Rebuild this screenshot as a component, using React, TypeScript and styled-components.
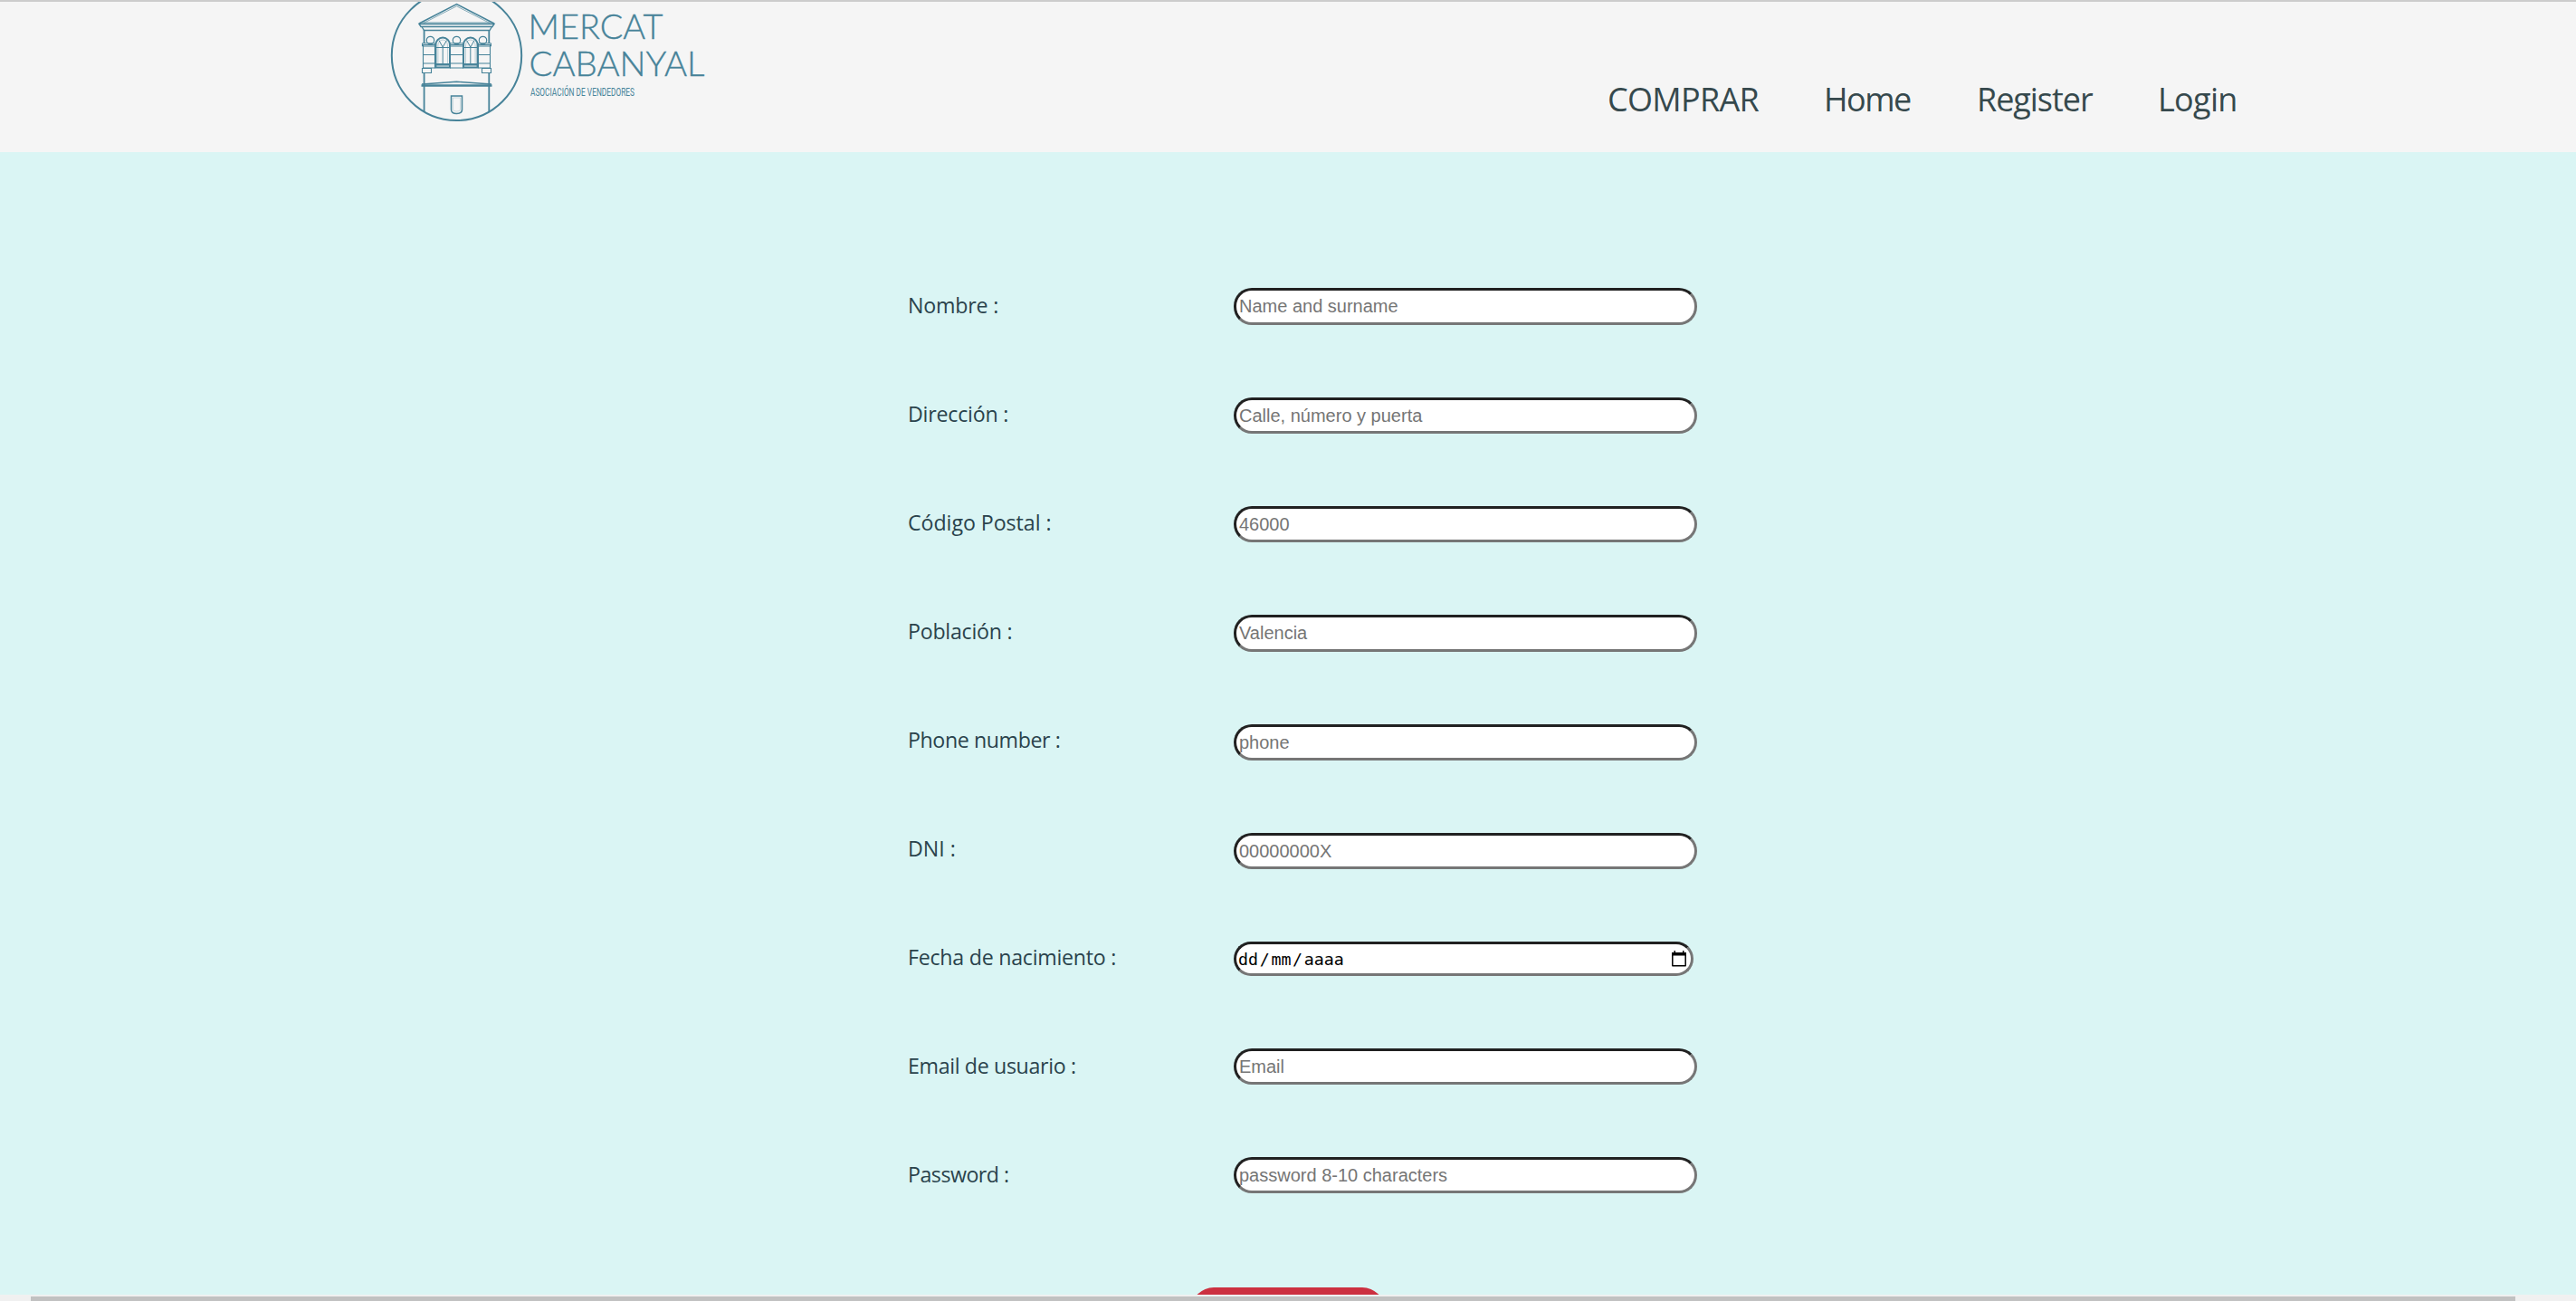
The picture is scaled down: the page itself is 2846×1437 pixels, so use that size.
import React from "react";
import styled, { createGlobalStyle } from "styled-components";

const Global = createGlobalStyle`
  *{box-sizing:border-box}
  html,body{margin:0;padding:0;overflow:hidden}
  body{font-family:"Open Sans","Noto Sans",sans-serif;}
`;
const Page = styled.div`
  width:2846px;height:1437px;display:flex;flex-direction:column;background:#daf5f4;overflow:hidden;
`;
const Header = styled.header`
  flex:none;height:168px;background:#f5f5f5;border-top:2px solid #cccccc;
  display:flex;justify-content:space-between;padding:0 373px 0 420px;
`;
const Logo = styled.svg`display:block;width:380px;height:166px;`;
const Nav = styled.nav`display:flex;padding-top:83px;`;
const NavLink = styled.a<{ $w: number; $ls: number }>`
  width:${p => p.$w}px;font-size:36px;line-height:50px;color:#36494d;letter-spacing:${p => p.$ls}px;white-space:nowrap;
`;
const Form = styled.form`
  flex:1;min-height:0;overflow:hidden;display:flex;flex-direction:column;padding:150px 0 0 1003px;
`;
const Row = styled.div`
  display:flex;align-items:flex-start;height:120px;flex:none;
`;
const Label = styled.label<{ $ls: number }>`
  width:360px;line-height:38px;font-size:23.2px;color:#2a434c;letter-spacing:${p => p.$ls}px;white-space:nowrap;
`;
const Field = styled.input<{ $h: number; $drop: number }>`
  width:512px;height:${p => p.$h}px;margin:${p => p.$drop}px 0 0;border:3px inset #767676;border-radius:20px;padding:0 3px;
  background:#fff;font:20px "Liberation Sans",Arial,sans-serif;outline:none;
  &::placeholder{color:#757575;opacity:1}
`;
const DateField = styled.div<{ $drop: number }>`
  width:508px;height:38px;margin-top:${p => p.$drop}px;border:3px inset #767676;border-radius:20px;padding:0 5px 0 2px;background:#fff;
  display:flex;align-items:center;justify-content:space-between;color:#000;
`;
const DateText = styled.div`
  display:flex;gap:1.7px;padding-top:2px;font:18.3px/32px "DejaVu Sans Mono",monospace;
`;
const Submit = styled.button`
  flex:none;width:214px;height:50px;margin:24px 0 0 313px;border:0;border-radius:25px;background:#cc3040;
`;
const Scroll = styled.div`
  flex:none;height:7px;background:#f0f0f0;padding:2px 67px 0 34px;
`;
const Thumb = styled.div`height:5px;background:#c1c1c1;`;

const C = "#478399";
function Pilaster({ x, w }: { x: number; w: number }) {
  return <path d={`M${x} 49.500h${w}v25.500h${-w}zM${x} 60.500h${w}M${x} 70h${w}`} strokeWidth="1.1" />;
}
function Window({ x }: { x: number }) {
  return <g>
    <path d={`M${x} 74.500V49.500a7.800 8 0 0 1 15.600 0V74.500z`} strokeWidth="2" />
    <path d={`M${x + 2.500} 70V50a5.300 6 0 0 1 10.600 0V70`} strokeWidth=".6" opacity=".55" />
    <path d={`M${x} 52.500h15.600M${x + 7.800} 52.500v18M${x + 3.500} 44.500l4.300 7.500l4.300-7.500`} strokeWidth="1" />
    <path d={`M${x} 71.300h15.600`} strokeWidth="2.500" />
  </g>;
}
function Brand() {
  return <Logo viewBox="0 2 380 166" fill="none" stroke={C}>
    <circle cx="84.500" cy="61.300" r="71.700" strokeWidth="2" />
    <path d="M43 26L84.500 4.500L126 26" strokeWidth="1.500" />
    <path d="M48 25.500L84.500 6.800L121 25.500" strokeWidth=".8" opacity=".8" />
    <path d="M43 26.500H126L124 29.500H45z" strokeWidth="1.400" />
    <path d="M46 25h77" strokeWidth=".8" />
    <path d="M46 29.500l2.500 4h72.500l2.500-4" strokeWidth="1.300" />
    <path d="M48.600 33V48M120.300 33V48M48.600 81V123.500M120.300 81V123.500" strokeWidth="1.800" />
    {[55.5, 84.5, 113.5].map(x => <circle key={x} cx={x} cy="44.500" r="4.200" strokeWidth="1.2" />)}
    <path d="M46.500 47.800h14v3.200h-14zM77 47.800h15v3.200H77zM108.500 47.800h14v3.200h-14z" strokeWidth="1" />
    <Pilaster x={47.5} w={13} /><Pilaster x={77.5} w={14} /><Pilaster x={108.5} w={13} />
    <Window x={61.4} /><Window x={92} />
    <path d="M46.500 75.500h10v5h-10zM112.500 75.500h10v5h-10z" strokeWidth="1.1" />
    <path d="M46 93L84.500 90.200L123 93" strokeWidth="1.400" />
    <path d="M45.500 94.500H123.500" strokeWidth="2.300" />
    <path d="M78.500 106h12v15q0 4.500-6 4.500t-6-4.500z" strokeWidth="1.500" />
    <path d="M80.500 108h8v13q0 2-4 2t-4-2z" strokeWidth=".6" opacity=".4" />
    <g fill={C} stroke={C} strokeWidth=".35" fontFamily="Lato, sans-serif" fontWeight="300">
      <text x="163.500" y="43" fontSize="37" textLength="149" lengthAdjust="spacingAndGlyphs">MERCAT</text>
      <text x="164.500" y="84" fontSize="37" textLength="194" lengthAdjust="spacingAndGlyphs">CABANYAL</text>
      <text x="166" y="106" fontSize="12.500" stroke="none" fontFamily="Roboto, sans-serif" fontWeight="400" textLength="115" lengthAdjust="spacingAndGlyphs">ASOCIACIÓN DE VENDEDORES</text>
    </g>
  </Logo>;
}
function CalendarIcon() {
  return <svg width="16" height="18" viewBox="0 0 16 18">
    <path d="M.8 4h14.400v12.700H.8z" fill="none" stroke="#000" strokeWidth="1.500" strokeLinejoin="round" />
    <path d="M0 2h16v3.500H0zM2.500 0h1.500v3H2.500zM12 0h1.500v3H12z" />
  </svg>;
}

const fields = [
  { label: "Nombre :", ls: -0.2, ph: "Name and surname", h: 41, drop: 0 },
  { label: "Dirección :", ls: -0.22, ph: "Calle, número y puerta", h: 40, drop: 1 },
  { label: "Código Postal :", ls: -0.05, ph: "46000", h: 40, drop: 1 },
  { label: "Población :", ls: -0.25, ph: "Valencia", h: 41, drop: 1 },
  { label: "Phone number :", ls: -0.4, ph: "phone", h: 40, drop: 2 },
  { label: "DNI :", ls: 0, ph: "00000000X", h: 40, drop: 2 },
  { label: "Fecha de nacimiento :", ls: -0.25, h: 38, drop: 2 },
  { label: "Email de usuario :", ls: -0.35, ph: "Email", h: 40, drop: 0 },
  { label: "Password :", ls: -0.5, ph: "password 8-10 characters", h: 40, drop: 0 },
];

export default function App() {
  return <Page>
    <Global />
    <Header>
      <Brand />
      <Nav>
        <NavLink $w={239} $ls={-0.7}>COMPRAR</NavLink>
        <NavLink $w={169} $ls={-1.5}>Home</NavLink>
        <NavLink $w={200} $ls={-1.05}>Register</NavLink>
        <NavLink $w={89} $ls={-0.7}>Login</NavLink>
      </Nav>
    </Header>
    <Form>
      {fields.map(f => <Row key={f.label}>
        <Label $ls={f.ls}>{f.label}</Label>
        {f.ph ? <Field $h={f.h} $drop={f.drop} placeholder={f.ph} /> : <DateField $drop={f.drop}>
          <DateText><span>dd</span><span>/</span><span>mm</span><span>/</span><span>aaaa</span></DateText>
          <CalendarIcon />
        </DateField>}
      </Row>)}
      <Submit type="button" />
    </Form>
    <Scroll><Thumb /></Scroll>
  </Page>;
}
